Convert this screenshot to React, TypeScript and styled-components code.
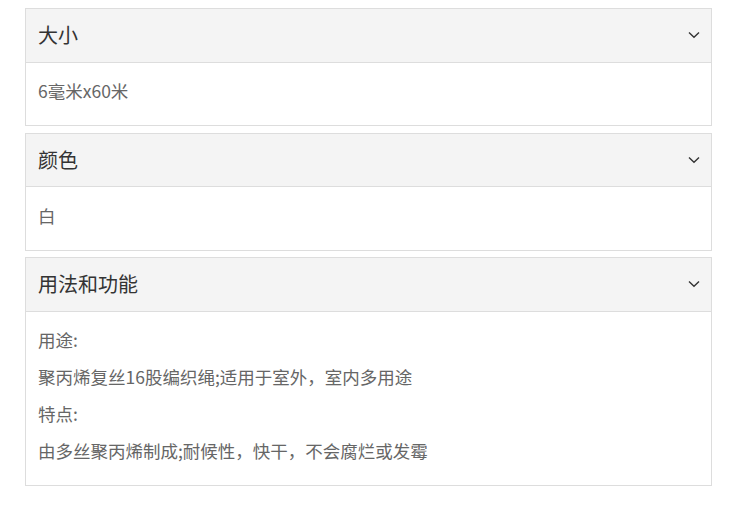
import React from "react";
import styled, { createGlobalStyle } from "styled-components";

const Global = createGlobalStyle`
  html, body { margin: 0; padding: 0; background: #fff; }
  body { font-family: "Microsoft YaHei", "Noto Sans CJK SC", "Noto Sans", sans-serif; }
`;

const Page = styled.div`
  padding: 8px 18px 0 25px;
  width: 687px;
  display: flex;
  flex-direction: column;
  gap: 6.5px;
`;

const Panel = styled.section`
  border: 1px solid #dddddd;
  background: #fff;
`;

const Header = styled.div`
  height: 52.5px;
  background: #f4f4f4;
  border-bottom: 1px solid #dddddd;
  display: flex;
  align-items: center;
  justify-content: space-between;
  padding: 0 11px 0 12px;
`;

const Title = styled.h3`
  margin: 0;
  font-size: 20px;
  font-weight: 400;
  color: #333;
  line-height: 1;
`;

const Body = styled.div`
  padding: 15.5px 12px 21.5px;
`;

const Line = styled.p`
  margin: 0 0 11.5px;
  font-size: 17.5px;
  line-height: 25.5px;
  color: #666;
  &:last-child { margin-bottom: 0; }
`;

const Chevron = () => (
  <svg width="12" height="8" viewBox="0 0 12 8" fill="none">
    <path d="M1 1.5 L6 6.2 L11 1.5" stroke="#333" strokeWidth="1.4" />
  </svg>
);

const items: { title: string; lines: string[] }[] = [
  { title: "大小", lines: ["6毫米x60米"] },
  { title: "颜色", lines: ["白"] },
  {
    title: "用法和功能",
    lines: [
      "用途:",
      "聚丙烯复丝16股编织绳;适用于室外，室内多用途",
      "特点:",
      "由多丝聚丙烯制成;耐候性，快干，不会腐烂或发霉",
    ],
  },
];

export default function App() {
  return (
    <>
      <Global />
      <Page>
        {items.map((it) => (
          <Panel key={it.title}>
            <Header>
              <Title>{it.title}</Title>
              <Chevron />
            </Header>
            <Body>
              {it.lines.map((l, i) => (
                <Line key={i}>{l}</Line>
              ))}
            </Body>
          </Panel>
        ))}
      </Page>
    </>
  );
}
